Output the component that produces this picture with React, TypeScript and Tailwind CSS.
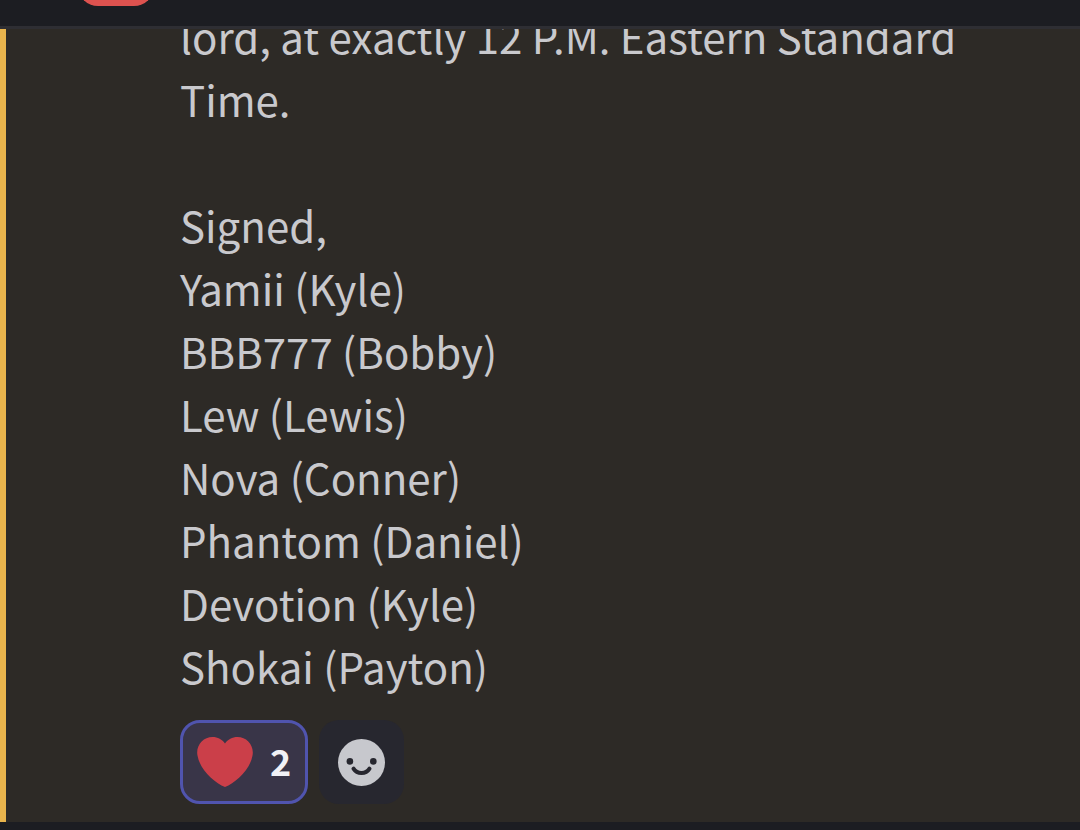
const signers = [
  'Yamii (Kyle)',
  'BBB777 (Bobby)',
  'Lew (Lewis)',
  'Nova (Conner)',
  'Phantom (Daniel)',
  'Devotion (Kyle)',
  'Shokai (Payton)',
];

function HeartIcon() {
  return (
    <svg viewBox="0 0 36 36" className="size-14 shrink-0" aria-hidden="true">
      <path
        fill="#cb3f49"
        d="M35.885 11.833c0-5.45-4.418-9.868-9.867-9.868-3.308 0-6.227 1.633-8.018 4.129-1.791-2.496-4.71-4.129-8.017-4.129-5.45 0-9.868 4.417-9.868 9.868 0 .772.098 1.52.266 2.241C1.751 22.587 11.216 31.568 18 34.034c6.783-2.466 16.249-11.447 17.617-19.959.17-.721.268-1.469.268-2.242z"
      />
    </svg>
  );
}

function SmileIcon() {
  return (
    <svg viewBox="0 0 48 48" className="size-12 shrink-0" aria-hidden="true">
      <circle cx="23.5" cy="24.5" r="23.5" fill="#c7c8cd" />
      <circle cx="11.9" cy="23.4" r="3.3" fill="#27272f" />
      <circle cx="35.3" cy="23.4" r="3.3" fill="#27272f" />
      <path
        d="M15.5 30.6c1.8 2.9 4.8 4.3 8 4.3s6.2-1.4 8-4.3"
        fill="none"
        stroke="#27272f"
        strokeWidth="4"
        strokeLinecap="round"
      />
    </svg>
  );
}

export default function App() {
  return (
    <div className="flex h-screen flex-col overflow-hidden bg-[#1c1d22] font-['Noto_Sans_CJK_SC','Noto_Sans',sans-serif]">
      <header className="flex h-[29px] shrink-0 items-end overflow-hidden border-b-3 border-[#2e2e33] pb-5 pl-[78px]">
        <span className="h-12 w-[76px] shrink-0 rounded-[20px] bg-[#dd524f]" />
      </header>
      <main className="flex min-h-0 flex-1 flex-col justify-end overflow-hidden border-l-6 border-[#e9b44c] bg-[#2d2a26] pr-12 pb-[18px] pl-[174px]">
        <article className="text-[42px] leading-[63px] text-[#c9c9cd]">
          <p>lord, at exactly 12 P.M. Eastern Standard Time.</p>
          <p className="pt-[63px]">Signed,</p>
          <ul>
            {signers.map((name) => (
              <li key={name}>{name}</li>
            ))}
          </ul>
        </article>
        <div className="mt-[23px] flex gap-[11px]">
          <button
            type="button"
            aria-label="Heart reaction, 2"
            className="flex h-[84px] items-center gap-[17px] rounded-[20px] border-3 border-[#5054ae] bg-[#393548] px-3.5 font-['Noto_Sans_CJK_SC','Noto_Sans',sans-serif] text-[36px] leading-[48px] font-bold text-[#f1f1f6]"
          >
            <HeartIcon />
            <span className="pb-1">2</span>
          </button>
          <button
            type="button"
            aria-label="Add reaction"
            className="flex h-[84px] w-[85px] items-center justify-center rounded-[20px] bg-[#27272f]"
          >
            <SmileIcon />
          </button>
        </div>
      </main>
      <footer className="h-2 shrink-0 bg-[#1c1d22]" />
    </div>
  );
}
